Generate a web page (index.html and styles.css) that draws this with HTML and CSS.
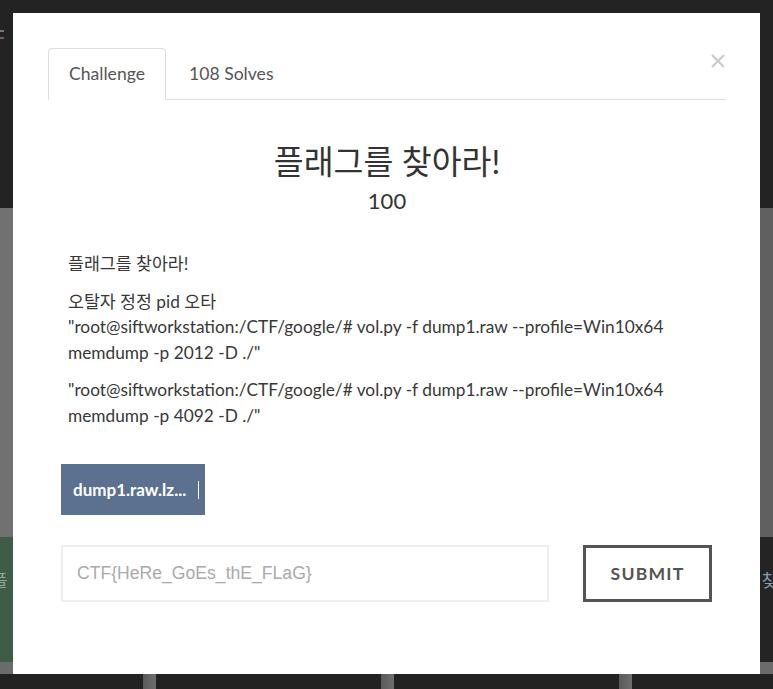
FILE: index.html
```html
<!DOCTYPE html>
<html lang="ko">
<head>
<meta charset="utf-8">
<title>Challenge</title>
<link rel="stylesheet" href="styles.css">
</head>
<body>
<div class="page">
  <div class="topbar"><span class="nav-mark"></span><span class="nav-mark red"></span></div>
  <div class="hero"></div>
  <div class="cards">
    <div class="card green"><span class="card-text">플</span></div>
    <div class="card-gap"></div>
    <div class="card dark"><span class="card-text blue">찾아</span></div>
  </div>
  <div class="strip"></div>
  <div class="footer">
    <div class="footer-col first"></div><div class="footer-sep"></div>
    <div class="footer-col"></div><div class="footer-sep"></div>
    <div class="footer-col"></div><div class="footer-sep"></div>
    <div class="footer-col last"></div>
  </div>
</div>

<div class="modal">
  <button class="close" aria-label="Close">
    <svg width="14" height="14" viewBox="0 0 14 14"><path d="M1 1L13 13M13 1L1 13" stroke="#c9c9c9" stroke-width="2" fill="none"/></svg>
  </button>
  <ul class="tabs">
    <li class="tab active">Challenge</li>
    <li class="tab">108 Solves</li>
  </ul>
  <h2 class="title">플래그를 찾아라!</h2>
  <h3 class="value">100</h3>
  <div class="desc">
    <p>플래그를 찾아라!</p>
    <p>오탈자 정정 pid 오타<br>"root@siftworkstation:/CTF/google/# vol.py -f dump1.raw --profile=Win10x64 memdump -p 2012 -D ./"</p>
    <p>"root@siftworkstation:/CTF/google/# vol.py -f dump1.raw --profile=Win10x64 memdump -p 4092 -D ./"</p>
  </div>
  <div class="files">
    <a class="file-btn"><span class="file-name">dump1.raw.lz...</span><span class="file-bar"></span></a>
  </div>
  <div class="submit-row">
    <input class="flag-input" type="text" placeholder="CTF{HeRe_GoEs_thE_FLaG}">
    <button class="submit">SUBMIT</button>
  </div>
</div>
</body>
</html>
```

FILE: styles.css
```css
* { box-sizing: border-box; }
html, body { margin: 0; padding: 0; }
body {
  font-family: "Lato", "Noto Sans CJK KR", sans-serif;
  background: #222;
  overflow: hidden;
  height: 689px;
}
.page { display: flex; flex-direction: column; }
.topbar { height: 208px; background: #232323; padding-top: 30px; display: flex; flex-direction: column; gap: 5px; }
.nav-mark { display: block; width: 4px; height: 2px; background: #777; }
.nav-mark.red { background: #7a5a5a; }
.hero { height: 329px; background: linear-gradient(90deg, #717171 0%, #6d6d6d 50%, #606060 100%); }
.cards { height: 125px; display: flex; }
.card { display: flex; align-items: flex-start; padding-top: 34px; }
.card.green { width: 300px; background: #3e5d46; }
.card-gap { flex: 1; background: #262626; }
.card.dark { width: 200px; background: #242424; justify-content: flex-end; }
.card-text { font-size: 17px; line-height: 20px; color: #9aa59c; margin-left: -8px; }
.card-text.blue { color: #8d9cab; margin-left: 0; margin-right: -20px; }
.strip { height: 12px; background: #6b6b6b; }
.footer { height: 15px; display: flex; background: #222; }
.footer-col { flex: none; width: 225px; }
.footer-col.first { width: 143px; }
.footer-col.last { flex: 1; }
.footer-sep { flex: none; width: 13px; background: linear-gradient(90deg, #5a5a5a, #6e6e6e); }

.modal {
  position: fixed;
  top: 13px;
  left: 13px;
  width: 747px;
  height: 661px;
  background: #fff;
  padding: 35px 34px 0 35px;
  color: #333;
}
.close {
  position: absolute;
  top: 41px;
  right: 35px;
  width: 14px;
  height: 14px;
  padding: 0;
  border: 0;
  background: none;
  display: block;
}
.close svg { display: block; }
.tabs {
  list-style: none;
  margin: 0;
  padding: 0;
  display: flex;
  border-bottom: 1px solid #ddd;
}
.tab {
  font-size: 17.6px;
  line-height: 20px;
  padding: 15px 20px;
  margin-right: 2px;
  margin-bottom: -1px;
  border: 1px solid transparent;
  border-radius: 4px 4px 0 0;
  color: #555;
}
.tab.active {
  border-color: #ddd;
  border-bottom-color: #fff;
  background: #fff;
}
.title {
  margin: 43px 0 0;
  text-align: center;
  font-weight: 400;
  font-size: 32.5px;
  line-height: 38px;
  color: #333;
}
.value {
  margin: 6px 0 0;
  text-align: center;
  font-weight: 400;
  font-size: 22px;
  line-height: 28px;
  color: #333;
}
.desc {
  margin-top: 36px;
  padding: 0 20px;
  font-size: 17.3px;
  line-height: 25.5px;
  color: #383838;
}
.desc p { margin: 0 0 12px; }
.desc p:last-child { margin-bottom: 0; }
.files { margin-top: 36px; padding-left: 13px; display: flex; }
.file-btn {
  width: 144px;
  height: 51px;
  background: #5c718f;
  color: #fff;
  display: flex;
  align-items: center;
  padding-left: 12px;
  gap: 12px;
  font-weight: 700;
  font-size: 17px;
}
.file-bar { width: 1px; height: 18px; background: #fff; }
.submit-row {
  margin-top: 30px;
  padding: 0 14px 0 13px;
  display: flex;
  gap: 34px;
}
.flag-input {
  width: 488px;
  height: 57px;
  border: 2px solid #eee;
  padding: 0 14px;
  font-family: "Liberation Sans", Arial, sans-serif;
  font-size: 17.6px;
  color: #555;
  outline: none;
}
.flag-input::placeholder { color: #aaa; }
.submit {
  width: 129px;
  height: 57px;
  background: #fff;
  border: 3px solid #545454;
  color: #545454;
  font-family: "Lato", sans-serif;
  font-weight: 700;
  font-size: 17.6px;
  letter-spacing: 1.2px;
  padding: 0;
}
```
